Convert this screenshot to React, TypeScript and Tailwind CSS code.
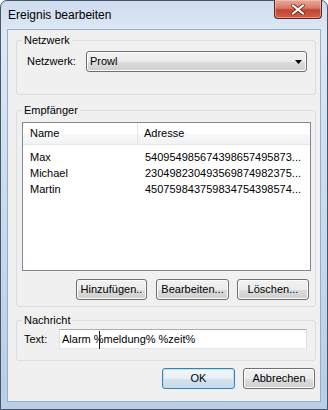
import React from 'react';

// Win7 "Ereignis bearbeiten" dialog

const btn =
  'flex h-[21px] items-center justify-center rounded-[3px] border border-[#707070] bg-[linear-gradient(to_bottom,#f2f2f2_0%,#ebebeb_50%,#dddddd_51%,#cfcfcf_100%)] shadow-[inset_0_0_0_1px_#fcfcfc] text-[11px] text-black';

const okBtn =
  'flex h-[21px] items-center justify-center rounded-[3px] border border-[#3c7fb1] bg-[linear-gradient(to_bottom,#f4f8fc_0%,#e6eef6_50%,#d6e2ee_51%,#c9d8e8_100%)] shadow-[inset_0_0_0_1px_#b9e2f9] text-[11px] text-black';

const fieldset = 'ml-[8px] w-[300px] rounded-[3px] border border-[#d5dfe5] p-0';
const legend = 'ml-[5px] px-[2px] text-[11px] leading-[14px] text-black';

const recipients = [
  { name: 'Max', address: '540954985674398657495873...' },
  { name: 'Michael', address: '230498230493569874982375...' },
  { name: 'Martin', address: '450759843759834754398574...' },
];

export default function App() {
  return (
    <div className="relative flex h-[410px] w-[328px] flex-col rounded-t-[7px] border border-[#4a5566] bg-[linear-gradient(to_bottom,#cddcef,#dde8f5_30px,#c9dbef_200px,#b8cee8)] font-['Liberation_Sans',Arial,sans-serif] text-black">
      {/* title bar */}
      <div className="flex h-[28px] items-start">
        <div className="flex h-[28px] items-center pl-[7px] text-[12px]">Ereignis bearbeiten</div>
        <div className="ml-auto mr-[5px] -mt-[1px] flex h-[19px] w-[48px] items-center justify-center rounded-b-[4px] border border-t-0 border-[#5a2620] bg-[linear-gradient(to_bottom,#e9a99b_0%,#d77a69_45%,#c4432f_55%,#d0614a_100%)] shadow-[inset_0_0_0_1px_rgba(255,210,200,0.5)]">
          <svg width="14" height="11" viewBox="0 0 14 11">
            <path d="M2 1.5 L12 9.5 M12 1.5 L2 9.5" stroke="#6b2a22" strokeWidth="3.6" strokeLinecap="round" />
            <path d="M2 1.5 L12 9.5 M12 1.5 L2 9.5" stroke="#ffffff" strokeWidth="2.2" strokeLinecap="round" />
          </svg>
        </div>
      </div>

      {/* client area */}
      <div className="ml-[6px] flex h-[373px] w-[314px] flex-col border border-[#97aec9] bg-[#f0f0f0]">
        <fieldset className={`${fieldset} mt-[3px] h-[62px]`}>
          <legend className={legend}>Netzwerk</legend>
          <div className="mt-[4px] flex h-[21px] items-center">
            <div className="w-[69px] pl-[10px] text-[11px]">Netzwerk:</div>
            <div className="flex h-[21px] w-[221px] items-center rounded-[3px] border border-[#707070] bg-[linear-gradient(to_bottom,#f2f2f2_0%,#ebebeb_50%,#dddddd_51%,#cfcfcf_100%)] shadow-[inset_0_0_0_1px_#fcfcfc]">
              <span className="pl-[3px] text-[11px]">Prowl</span>
              <svg className="ml-auto mr-[4px]" width="7" height="4" viewBox="0 0 7 4">
                <path d="M0 0 H7 L3.5 4 Z" fill="#000" />
              </svg>
            </div>
          </div>
        </fieldset>

        <fieldset className={`${fieldset} mt-[8px] h-[204px]`}>
          <legend className={legend}>Empfänger</legend>
          <div className="ml-[5px] mt-[5px] h-[149px] w-[289px] border border-[#828790] bg-white text-[11px]">
            <div className="flex h-[22px] items-center border-b border-[#e5e5e5] bg-[linear-gradient(to_bottom,#ffffff_0%,#ffffff_50%,#f7f8fa_51%,#f1f2f4_100%)]">
              <div className="flex h-full w-[115px] items-center border-r border-[#e5e5e5] pl-[7px]">Name</div>
              <div className="pl-[6px]">Adresse</div>
            </div>
            <div className="pt-[4px]">
              {recipients.map((r) => (
                <div key={r.name} className="flex h-[16px] items-center">
                  <div className="w-[116px] pl-[7px]">{r.name}</div>
                  <div className="pl-[6px] whitespace-nowrap">{r.address}</div>
                </div>
              ))}
            </div>
          </div>
          <div className="mt-[8px] flex">
            <button className={`${btn} ml-[59px] w-[71px]`}>Hinzufügen..</button>
            <button className={`${btn} ml-[9px] w-[73px]`}>Bearbeiten...</button>
            <button className={`${btn} ml-[8px] w-[72px]`}>Löschen...</button>
          </div>
        </fieldset>

        <fieldset className={`${fieldset} mt-[6px] h-[48px]`}>
          <legend className={legend}>Nachricht</legend>
          <div className="mt-[2px] flex h-[20px] items-center">
            <div className="w-[42px] pl-[7px] text-[11px]">Text:</div>
            <div className="relative flex h-[20px] w-[248px] items-center border border-[#abadb3] border-l-[#dbdfe6] border-r-[#dbdfe6] border-b-[#e3e9ef] bg-white">
              <span className="pl-[2px] text-[11px] whitespace-pre">Alarm %meldung% %zeit%</span>
              <div className="absolute left-[39px] top-[1px] h-[18px] w-[1px] bg-[#222]" />
            </div>
          </div>
        </fieldset>

        <div className="ml-[154px] mt-[7px] flex gap-[8px]">
          <button className={`${okBtn} w-[73px]`}>OK</button>
          <button className={`${btn} w-[72px]`}>Abbrechen</button>
        </div>
      </div>
    </div>
  );
}
